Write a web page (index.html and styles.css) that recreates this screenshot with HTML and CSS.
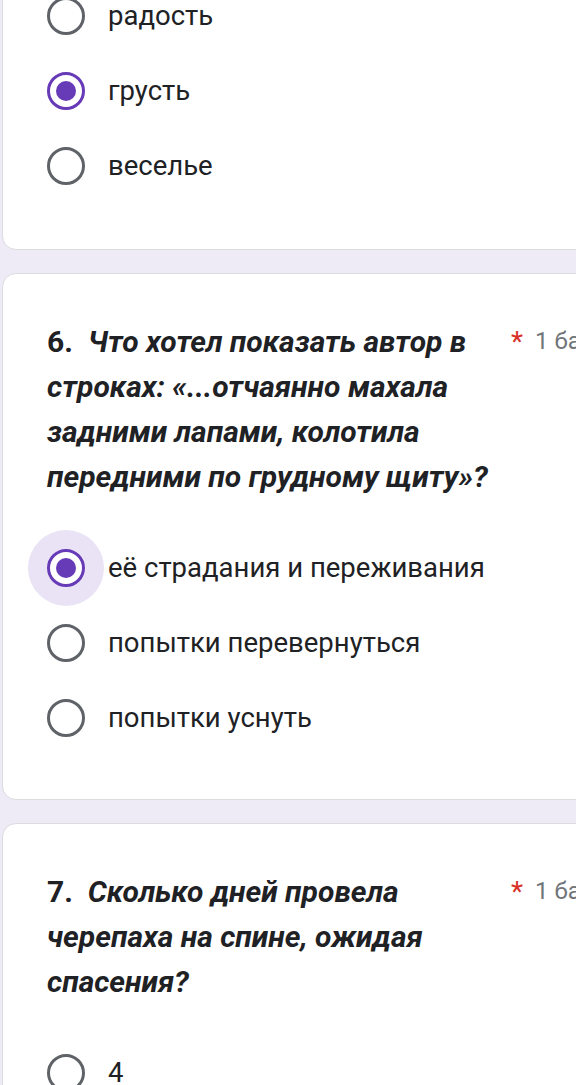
FILE: index.html
```html
<!DOCTYPE html>
<html lang="ru">
<head>
<meta charset="utf-8">
<link rel="stylesheet" href="styles.css">
</head>
<body>
<div class="page">
  <section class="card">
    <div class="options">
      <div class="option"><span class="radio"></span><span class="label">радость</span></div>
      <div class="option"><span class="radio checked"></span><span class="label">грусть</span></div>
      <div class="option"><span class="radio"></span><span class="label">веселье</span></div>
    </div>
  </section>

  <section class="card">
    <div class="header">
      <div class="title"><span class="num">6.</span>&nbsp; Что хотел показать автор в строках: «...отчаянно махала задними лапами, колотила передними по грудному щиту»?</div>
      <div class="points"><span class="req">*</span><span class="score">1 балл</span></div>
    </div>
    <div class="options">
      <div class="option"><span class="radio checked focused"></span><span class="label">её страдания и переживания</span></div>
      <div class="option"><span class="radio"></span><span class="label">попытки перевернуться</span></div>
      <div class="option"><span class="radio"></span><span class="label">попытки уснуть</span></div>
    </div>
  </section>

  <section class="card">
    <div class="header">
      <div class="title"><span class="num">7.</span>&nbsp; Сколько дней провела черепаха на спине, ожидая спасения?</div>
      <div class="points"><span class="req">*</span><span class="score">1 балл</span></div>
    </div>
    <div class="options">
      <div class="option"><span class="radio"></span><span class="label">4</span></div>
      <div class="option"><span class="radio"></span><span class="label">5</span></div>
    </div>
  </section>
</div>
</body>
</html>
```

FILE: styles.css
```css
html, body {
  margin: 0;
  padding: 0;
  background: #eeeaf6;
  overflow: hidden;
  height: 1085px;
}

body {
  font-family: Roboto, "Noto Sans", sans-serif;
  color: #202124;
}

.page {
  display: flex;
  flex-direction: column;
  gap: 23px;
  margin-top: -68px;
  padding-left: 2px;
  width: 680px;
}

.card {
  background: #fff;
  border: 1px solid #dadce0;
  border-radius: 14px;
  padding: 45px 44px 44px 44px;
}

.card:first-child {
  padding-bottom: 46px;
}

.header {
  display: flex;
  align-items: flex-start;
  margin-bottom: 31px;
}

.title {
  width: 452px;
  font-size: 30px;
  line-height: 45px;
  font-weight: 700;
  font-style: italic;
  color: #202124;
}

.title .num {
  font-style: normal;
}

.points {
  margin-left: 12px;
  display: flex;
  align-items: flex-start;
  white-space: nowrap;
  line-height: 45px;
}

.req {
  color: #d93025;
  font-size: 28px;
  margin-right: 12px;
}

.score {
  color: #70757a;
  font-size: 24px;
}

.options {
  display: flex;
  flex-direction: column;
}

.option {
  display: flex;
  align-items: center;
  height: 75px;
}

.radio {
  position: relative;
  flex: none;
  width: 38px;
  height: 38px;
  box-sizing: border-box;
  border: 3px solid #5f6368;
  border-radius: 50%;
  margin-right: 23px;
}

.radio.checked {
  border-color: #673ab7;
}

.radio.checked::after {
  content: "";
  position: absolute;
  left: 6px;
  top: 6px;
  width: 20px;
  height: 20px;
  border-radius: 50%;
  background: #673ab7;
}

.radio.focused {
  box-shadow: 0 0 0 19px #e9e3f5;
}

.label {
  font-size: 27.5px;
  color: #202124;
}
```
